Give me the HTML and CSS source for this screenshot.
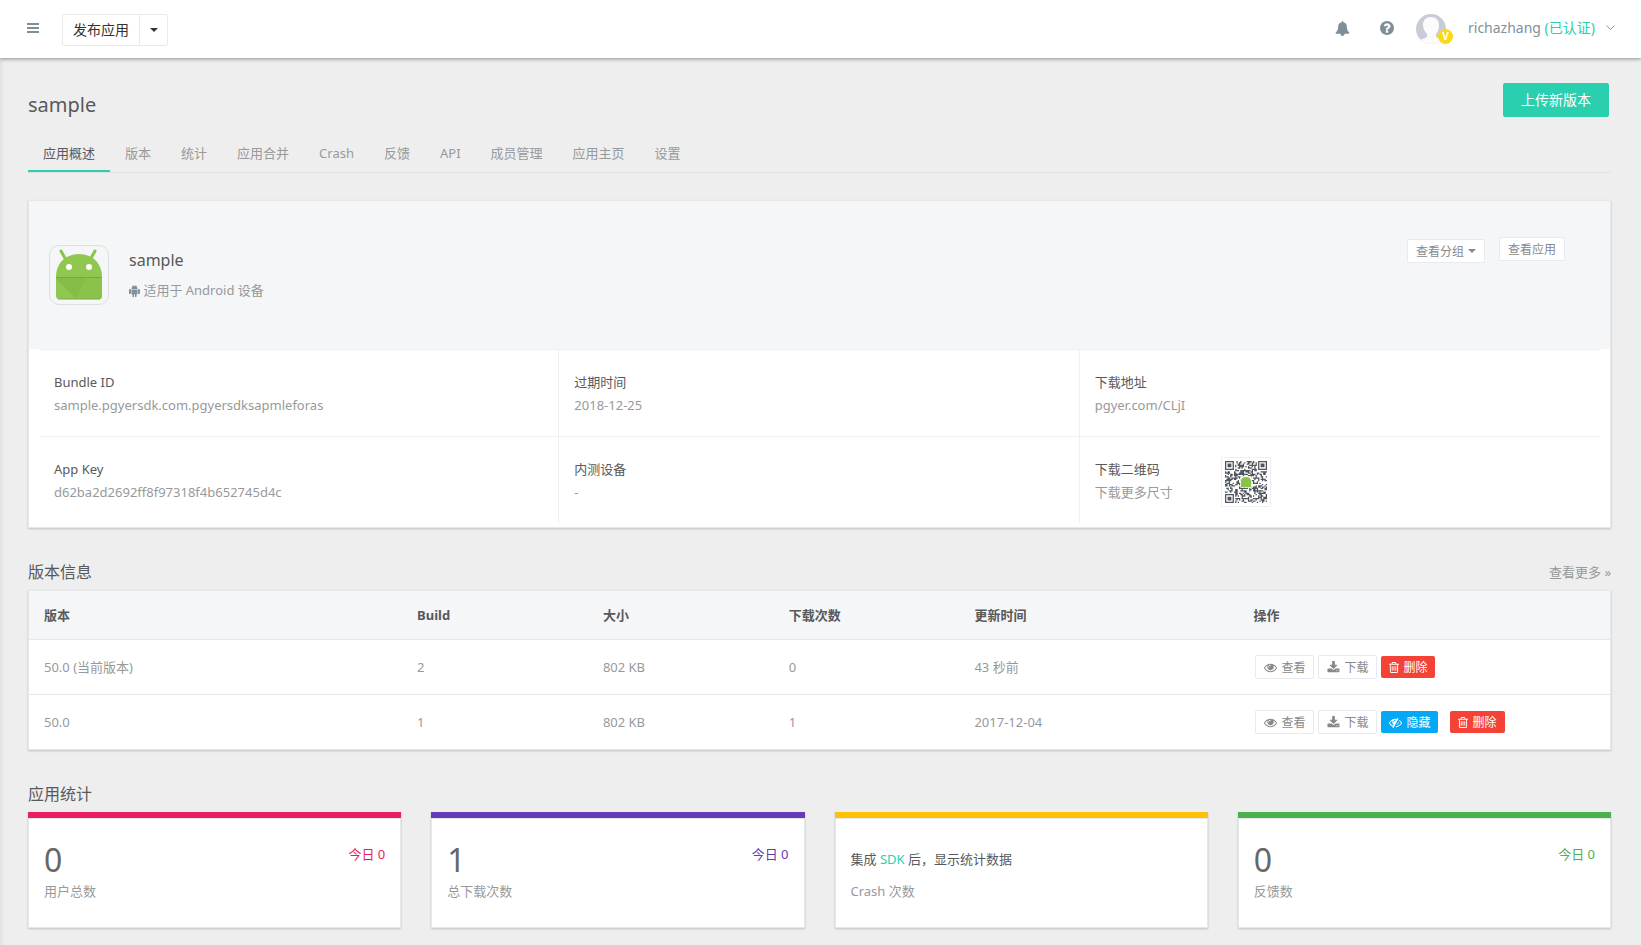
FILE: index.html
```html
<!DOCTYPE html>
<html lang="zh-CN">
<head>
    <meta charset="utf-8">
    <title>sample</title>
    <link rel="stylesheet" href="styles.css">
</head>
<body>
    <!-- shared icons -->
    <svg class="sprite" width="0" height="0">
        <symbol id="i-eye" viewBox="0 0 1792 1792"><path d="M1664 960q-152-236-381-353 61 104 61 225 0 185-131.500 316.500t-316.500 131.500-316.500-131.500-131.500-316.500q0-121 61-225-229 117-381 353 133 205 333.500 326.500t434.500 121.500 434.500-121.500 333.500-326.500zm-720-384q0-20-14-34t-34-14q-125 0-214.500 89.500t-89.500 214.500q0 20 14 34t34 14 34-14 14-34q0-86 61-147t147-61q20 0 34-14t14-34zm848 384q0 34-20 69-140 230-376.500 368.500t-499.500 138.500-499.500-139-376.500-368q-20-35-20-69t20-69q140-229 376.500-368t499.500-139 499.500 139 376.500 368q20 35 20 69z"/></symbol>
        <symbol id="i-download" viewBox="0 0 1792 1792"><path d="M1344 1344q0-26-19-45t-45-19-45 19-19 45 19 45 45 19 45-19 19-45zm256 0q0-26-19-45t-45-19-45 19-19 45 19 45 45 19 45-19 19-45zm128-224v320q0 40-28 68t-68 28h-1472q-40 0-68-28t-28-68v-320q0-40 28-68t68-28h465l135 136q58 56 136 56t136-56l136-136h464q40 0 68 28t28 68zm-325-569q17 41-14 70l-448 448q-18 19-45 19t-45-19l-448-448q-31-29-14-70 17-39 59-39h256v-448q0-26 19-45t45-19h256q26 0 45 19t19 45v448h256q42 0 59 39z"/></symbol>
        <symbol id="i-trash" viewBox="192 0 1408 1792"><path d="M704 736v576q0 14-9 23t-23 9h-64q-14 0-23-9t-9-23v-576q0-14 9-23t23-9h64q14 0 23 9t9 23zm256 0v576q0 14-9 23t-23 9h-64q-14 0-23-9t-9-23v-576q0-14 9-23t23-9h64q14 0 23 9t9 23zm256 0v576q0 14-9 23t-23 9h-64q-14 0-23-9t-9-23v-576q0-14 9-23t23-9h64q14 0 23 9t9 23zm128 724v-948h-896v948q0 22 7 40.500t14.500 27 10.500 8.500h832q3 0 10.500-8.500t14.500-27 7-40.500zm-672-1076h448l-48-117q-7-9-17-11h-317q-10 2-17 11zm928 32v64q0 14-9 23t-23 9h-96v948q0 83-47 143.500t-113 60.500h-832q-66 0-113-58.500t-47-141.500v-952h-96q-14 0-23-9t-9-23v-64q0-14 9-23t23-9h309l70-167q15-37 54-63t79-26h320q40 0 79 26t54 63l70 167h309q14 0 23 9t9 23z"/></symbol>
        <symbol id="i-eye-slash" viewBox="0 0 1792 1792"><path d="M555 1335l78-141q-87-63-136-159t-49-203q0-121 61-225-229 117-381 353 167 258 427 375zm389-759q0-20-14-34t-34-14q-125 0-214.500 89.500t-89.500 214.500q0 20 14 34t34 14 34-14 14-34q0-86 61-147t147-61q20 0 34-14t14-34zm363-191q0 7-1 9-106 189-316 567t-315 566l-49 89q-10 16-28 16-12 0-134-70-16-10-16-28 0-12 44-87-143-65-263.500-173t-208.500-245q-20-31-20-69t20-69q153-235 380-371t496-136q89 0 180 17l54-97q10-16 28-16 5 0 18 6t31 15.500 33 18.500 31.500 18.500 19.500 11.500q16 10 16 27zm37 447q0 139-79 253.500t-209 164.500l280-502q8 45 8 84zm448 128q0 35-20 69-39 64-109 145-150 172-347.500 267t-419.500 95l74-132q212-18 392.500-137t301.500-307q-115-179-282-294l63-112q95 64 182.500 153t144.500 184q20 34 20 69z"/></symbol>
    </svg>

    <header class="navbar">
        <button type="button" class="icon-btn menu-btn" aria-label="菜单">
            <svg width="12" height="10" viewBox="0 0 12 10"><path d="M0 0h12v2H0zM0 4h12v2H0zM0 8h12v2H0z"/></svg>
        </button>
        <div class="btn-group">
            <button type="button" class="publish">发布应用</button>
            <button type="button" class="publish-toggle" aria-label="更多"><span class="caret"></span></button>
        </div>
        <div class="nav-right">
            <button type="button" class="icon-btn" aria-label="通知">
                <svg width="15" height="15" viewBox="0 0 1792 1792"><path d="M1728 1408q0 52-38 90t-90 38h-448q0 106-75 181t-181 75-181-75-75-181h-448q-52 0-90-38t-38-90q50-42 91-88t85-119.500 74.500-158.500 50-206 19.500-260q0-152 117-282.500t307-158.500q-8-19-8-39 0-40 28-68t68-28 68 28 28 68q0 20-8 39 190 28 307 158.500t117 282.500q0 139 19.500 260t50 206 74.500 158.500 85 119.500 91 88z"/></svg>
            </button>
            <button type="button" class="icon-btn" aria-label="帮助">
                <svg width="14" height="14" viewBox="128 128 1536 1536"><path d="M1024 1376v-192q0-14-9-23t-23-9h-192q-14 0-23 9t-9 23v192q0 14 9 23t23 9h192q14 0 23-9t9-23zm256-672q0-88-55.500-163t-138.500-116-170-41q-243 0-371 213-15 24 8 42l132 100q7 6 19 6 16 0 25-12 53-68 86-92 34-24 86-24 48 0 85.500 26t37.500 59q0 38-20 61t-68 45q-63 28-115.500 86.500t-52.500 125.500v36q0 14 9 23t23 9h192q14 0 23-9t9-23q0-19 21.500-49.500t54.500-49.500q32-18 49-28.500t46-35 44.500-48 28-60.500 12.500-81zm384 192q0 209-103 385.500t-279.500 279.500-385.500 103-385.500-103-279.500-279.500-103-385.500 103-385.500 279.500-279.500 385.500-103 385.500 103 279.500 279.500 103 385.500z"/></svg>
            </button>
            <a href="#" class="user">
                <span class="avatar">
                    <svg width="30" height="30" viewBox="0 0 30 30">
                        <defs><clipPath id="round"><circle cx="15" cy="15" r="15"/></clipPath></defs>
                        <g clip-path="url(#round)">
                            <rect width="30" height="30" fill="#c9ccd4"/>
                            <path d="M15 3c5 0 8 3 8 8 0 4-1 7-3 9v3c3 2 7 2 9 4v3H2v-3c3-2 6-2 9-4v-3c-2-2-4-5-4-9 0-5 3-8 8-8z" fill="#fbfbfc"/>
                        </g>
                    </svg>
                    <span class="vip">V</span>
                </span>
                <span>richazhang <span class="verified">(已认证)</span></span>
                <svg class="chevron" width="9" height="6" viewBox="0 0 9 6"><path d="M0.500 0.500L4.500 4.500L8.500 0.500"/></svg>
            </a>
        </div>
    </header>

    <main class="content">
        <div class="page-head">
            <h1>sample</h1>
            <button type="button" class="upload">上传新版本</button>
        </div>

        <nav class="tabs">
            <a href="#" class="active">应用概述</a>
            <a href="#">版本</a>
            <a href="#">统计</a>
            <a href="#">应用合并</a>
            <a href="#">Crash</a>
            <a href="#">反馈</a>
            <a href="#">API</a>
            <a href="#">成员管理</a>
            <a href="#">应用主页</a>
            <a href="#">设置</a>
        </nav>

        <section class="panel app">
            <div class="app-head">
                <div class="app-icon">
                    <svg width="50" height="52" viewBox="0 0 50 52">
                        <path d="M7 2l5 9M41 2l-5 9" stroke="#8bc34a" stroke-width="3" stroke-linecap="round"/>
                        <path d="M2 28C2 14 12 5 25 5s23 9 23 23v19q0 3-3 3H5q-3 0-3-3z" fill="#8fc751"/>
                        <path d="M2 29h46v18q0 3-3 3H22z" fill="#8bc34a"/>
                        <path d="M2 29h30L22 50z" fill="#7fb446" opacity=".4"/>
                        <path d="M2 28h46v1H2z" fill="#76a843"/>
                        <path d="M4 50h42" stroke="#77a944"/>
                        <circle cx="15" cy="18" r="3" fill="#fff"/>
                        <circle cx="35" cy="18" r="3" fill="#fff"/>
                    </svg>
                </div>
                <div class="app-name">
                    <h2>sample</h2>
                    <p>
                        <svg width="11" height="12" viewBox="0 0 22 24"><path d="M5 8C5 5 6 3 8 2L7 0h1l1 2q2-1 4 0l1-2h1l-1 2c2 1 3 3 3 6zM5 9h12v10h-2v5h-3v-5h-2v5H7v-5H5zM0 10q0-2 2-2t2 2v6q0 2-2 2t-2-2zM18 10q0-2 2-2t2 2v6q0 2-2 2t-2-2z"/></svg>
                        适用于 Android 设备
                    </p>
                </div>
                <div class="app-actions">
                    <button type="button" class="btn">查看分组 <span class="caret"></span></button>
                    <button type="button" class="btn">查看应用</button>
                </div>
            </div>
            <div class="info">
                <div class="cell">
                    <h3>Bundle ID</h3>
                    <p>sample.pgyersdk.com.pgyersdksapmleforas</p>
                </div>
                <div class="cell">
                    <h3>过期时间</h3>
                    <p>2018-12-25</p>
                </div>
                <div class="cell">
                    <h3>下载地址</h3>
                    <p><a href="#">pgyer.com/CLjI</a></p>
                </div>
                <div class="cell">
                    <h3>App Key</h3>
                    <p>d62ba2d2692ff8f97318f4b652745d4c</p>
                </div>
                <div class="cell">
                    <h3>内测设备</h3>
                    <p>-</p>
                </div>
                <div class="cell qr-cell">
                    <div>
                        <h3>下载二维码</h3>
                        <p><a href="#">下载更多尺寸</a></p>
                    </div>
                    <div class="qr">
                        <svg width="42" height="42" viewBox="0 0 33 33">
                            <path id="qrModules" fill="#4f545e"/>
                            <rect x="12" y="12" width="9" height="9" fill="#fff"/>
                            <path d="M12.500 20.500v-4q0-4 4-4t4 4v4z" fill="#8bc34a"/>
                        </svg>
                    </div>
                </div>
            </div>
        </section>

        <div class="section-head">
            <h2>版本信息</h2>
            <a href="#">查看更多 »</a>
        </div>
        <table class="panel versions">
            <thead>
                <tr>
                    <th class="col-version">版本</th>
                    <th class="col-small">Build</th>
                    <th class="col-small">大小</th>
                    <th class="col-small">下载次数</th>
                    <th class="col-time">更新时间</th>
                    <th>操作</th>
                </tr>
            </thead>
            <tbody>
                <tr>
                    <td>50.0 (当前版本)</td>
                    <td>2</td>
                    <td>802 KB</td>
                    <td>0</td>
                    <td>43 秒前</td>
                    <td>
                        <div class="actions">
                            <button type="button" class="btn"><svg width="13" height="13"><use href="#i-eye"/></svg>查看</button>
                            <button type="button" class="btn"><svg width="13" height="13"><use href="#i-download"/></svg>下载</button>
                            <button type="button" class="btn danger"><svg width="10" height="13"><use href="#i-trash"/></svg>删除</button>
                        </div>
                    </td>
                </tr>
                <tr>
                    <td>50.0</td>
                    <td>1</td>
                    <td>802 KB</td>
                    <td>1</td>
                    <td>2017-12-04</td>
                    <td>
                        <div class="actions">
                            <button type="button" class="btn"><svg width="13" height="13"><use href="#i-eye"/></svg>查看</button>
                            <button type="button" class="btn"><svg width="13" height="13"><use href="#i-download"/></svg>下载</button>
                            <button type="button" class="btn info-btn"><svg width="13" height="13"><use href="#i-eye-slash"/></svg>隐藏</button>
                            <button type="button" class="btn danger"><svg width="10" height="13"><use href="#i-trash"/></svg>删除</button>
                        </div>
                    </td>
                </tr>
            </tbody>
        </table>

        <div class="section-head">
            <h2>应用统计</h2>
        </div>
        <div class="stats">
            <div class="stat pink">
                <div class="stat-top"><span class="number">0</span><span class="today">今日 0</span></div>
                <p>用户总数</p>
            </div>
            <div class="stat purple">
                <div class="stat-top"><span class="number">1</span><span class="today">今日 0</span></div>
                <p>总下载次数</p>
            </div>
            <div class="stat yellow">
                <div class="stat-top"><span class="hint">集成 <a href="#">SDK</a> 后，显示统计数据</span></div>
                <p>Crash 次数</p>
            </div>
            <div class="stat green">
                <div class="stat-top"><span class="number">0</span><span class="today">今日 0</span></div>
                <p>反馈数</p>
            </div>
        </div>
    </main>

    <script src="qr.js"></script>
</body>
</html>
```
FILE: styles.css
```css
* {
    box-sizing: border-box;
}
body {
    margin: 0;
    min-height: 100vh;
    background-color: #eee;
    color: #98999b;
    font-family: "Noto Sans", "Noto Sans CJK SC", sans-serif;
    font-size: 13px;
    line-height: 22px;
}
h1, h2, h3, p {
    margin: 0;
    font-weight: normal;
}
a {
    color: inherit;
    text-decoration: none;
}
button {
    font-family: inherit;
    cursor: pointer;
}
svg {
    fill: currentColor;
}
.sprite {
    position: absolute;
}
.caret {
    display: inline-block;
    width: 0;
    height: 0;
    border-top: 4px solid;
    border-left: 4px solid transparent;
    border-right: 4px solid transparent;
    vertical-align: middle;
}

/* top bar */
.navbar {
    position: relative;
    display: flex;
    align-items: center;
    height: 58px;
    padding: 0 26px;
    background-color: #fff;
    box-shadow: 0 1px 4px rgba(0,0,0,0.4);
    color: #7f929c;
    font-size: 14px;
}
.icon-btn {
    display: flex;
    padding: 0;
    border: none;
    background: none;
    color: #7f8f9a;
}
.menu-btn {
    margin: 0 23px 2px 1px;
}
.btn-group {
    display: flex;
    height: 32px;
    margin-top: 2px;
}
.btn-group button {
    border: 1px solid #e8eaf1;
    background-color: #fff;
    color: #333;
    font-size: 14px;
}
.btn-group .publish {
    padding: 0 10px 2px;
    border-radius: 2px 0 0 2px;
}
.btn-group .publish-toggle {
    display: flex;
    justify-content: center;
    align-items: center;
    width: 29px;
    margin-left: -1px;
    padding: 0;
    border-radius: 0 2px 2px 0;
}
.nav-right {
    display: flex;
    align-items: center;
    gap: 30px;
    margin-left: auto;
    padding-bottom: 2px;
}
.user {
    display: flex;
    align-items: center;
    margin-left: -8px;
}
.avatar {
    position: relative;
    display: flex;
    margin: 2px 22px 0 0;
}
.vip {
    position: absolute;
    right: -7px;
    bottom: 0;
    width: 15px;
    height: 15px;
    border-radius: 50%;
    background-color: #fbd916;
    color: #fff;
    font-size: 10px;
    font-weight: bold;
    line-height: 15px;
    text-align: center;
}
.verified {
    color: #29cfae;
}
.chevron {
    margin-left: 11px;
    fill: none;
    stroke: #8a99a2;
}

/* page */
.content {
    min-height: calc(100vh - 58px);
    padding: 25px 30px 16px 28px;
    box-shadow: inset 4px 0 4px -2px rgba(0,0,0,0.06);
}
.page-head {
    display: flex;
    justify-content: space-between;
    align-items: flex-start;
}
h1 {
    padding-top: 7px;
    color: #58595b;
    font-size: 20px;
    line-height: 30px;
}
.upload {
    height: 34px;
    margin-right: 2px;
    padding: 0 18px 2px;
    border: none;
    border-radius: 2px;
    background-color: #29cfae;
    color: #fff;
    font-size: 14px;
}
.tabs {
    display: flex;
    margin: 14px 0 27px;
    border-bottom: 1px solid #dedfe0;
}
.tabs a {
    padding: 7px 15px;
    line-height: 24px;
}
.tabs .active {
    padding-bottom: 5px;
    border-bottom: 2px solid #29cfae;
    color: #58595b;
}
.panel {
    border: 1px solid #e6e7e8;
    background-color: #fff;
    box-shadow: 0 1px 2px rgba(0,0,0,0.2);
}
.btn {
    display: inline-flex;
    align-items: center;
    gap: 4px;
    height: 24px;
    padding: 0 8px;
    border: 1px solid #e8eaf1;
    border-radius: 2px;
    background-color: #fff;
    color: #87898c;
    font-size: 12px;
}
.app {
    padding-bottom: 4px;
}
.app-head {
    display: flex;
    align-items: flex-start;
    height: 148px;
    padding: 36px 45px 0 20px;
    background-color: #f4f6f8;
}
.app-icon {
    display: flex;
    justify-content: center;
    align-items: center;
    width: 60px;
    height: 60px;
    margin: 8px 20px 0 0;
    border: 1px solid #dcdee0;
    border-radius: 10px;
}
.app-name h2 {
    padding-top: 10px;
    color: #58595b;
    font-size: 16px;
    line-height: 26px;
}
.app-name p {
    padding-top: 6px;
}
.app-name svg {
    color: #7f929c;
    vertical-align: -2px;
}
.app-actions {
    display: flex;
    gap: 14px;
    margin-left: auto;
}
.app-actions .btn:first-child {
    margin-top: 2px;
}
.info {
    display: grid;
    grid-template-columns: repeat(3, 1fr);
    margin: 0 10px;
}
.cell {
    min-height: 87px;
    padding: 20px 15px 0;
    border-top: 1px solid #eef0f2;
    border-right: 1px solid #eef0f2;
}
.cell:nth-child(3n) {
    border-right: none;
}
.cell h3 {
    color: #58595b;
    font-size: 13px;
    line-height: 24px;
}
.qr-cell {
    display: flex;
    gap: 48px;
}
.qr {
    display: flex;
    justify-content: center;
    align-items: center;
    width: 50px;
    height: 50px;
    border: 1px solid #eef0f2;
}

/* versions */
.section-head {
    display: flex;
    justify-content: space-between;
    align-items: center;
    margin: 31px 0 5px;
}
.section-head h2 {
    color: #58595b;
    font-size: 16px;
    line-height: 26px;
}
.versions {
    width: 100%;
    table-layout: fixed;
    border-collapse: separate;
    border-spacing: 0;
}
.versions th, .versions td {
    padding: 0 15px;
    text-align: left;
}
.versions th {
    height: 48px;
    background-color: #f4f6f8;
    color: #58595b;
}
.versions td {
    height: 55px;
    border-top: 1px solid #e6e7e8;
}
.col-version {
    width: 23.6%;
}
.col-small {
    width: 11.75%;
}
.col-time {
    width: 17.65%;
}
.actions {
    display: flex;
    align-items: center;
    gap: 4px;
    padding-left: 2px;
}
.danger, .info-btn {
    height: 22px;
    border: none;
    color: #fff;
}
.danger {
    background-color: #f44336;
}
.info-btn {
    background-color: #03a9f4;
}
.info-btn + .danger {
    margin-left: 8px;
}

/* stats */
.stats {
    display: grid;
    grid-template-columns: repeat(4, 1fr);
    gap: 30px;
}
.stat {
    min-height: 116px;
    padding: 20px 16px;
    border-top: 6px solid;
    background-color: #fff;
    box-shadow: inset 0 0 0 1px #e6e7e8, 0 1px 2px rgba(0,0,0,0.2);
}
.stat-top {
    display: flex;
    justify-content: space-between;
    height: 42px;
}
.number {
    color: #666769;
    font-size: 32px;
    line-height: 44px;
}
.today {
    line-height: 32px;
}
.hint {
    color: #58595b;
    line-height: 42px;
}
.hint a {
    color: #29cfae;
}
.pink {
    border-top-color: #e91e63;
}
.pink .today {
    color: #e91e63;
}
.purple {
    border-top-color: #673ab7;
}
.purple .today {
    color: #673ab7;
}
.yellow {
    border-top-color: #ffc107;
}
.green {
    border-top-color: #4caf50;
}
.green .today {
    color: #4caf50;
}
```
FILE: qr.js
```js
// fills the download code with modules, three finder squares in the corners
var size = 33;
var seed = 7;
var d = '';

function finder(x, y) {
    return Math.max(Math.abs(x - 3), Math.abs(y - 3));
}

for (var y = 0; y < size; y++) {
    for (var x = 0; x < size; x++) {
        var ring = Math.min(finder(x, y), finder(size - 1 - x, y), finder(x, size - 1 - y));
        seed = (seed * 1103515245 + 12345) % 2147483648;
        var on = ring <= 4 ? (ring !== 2 && ring !== 4) : seed / 2147483648 > 0.5;
        if (on) {
            d += 'M' + x + ' ' + y + 'h1v1h-1z';
        }
    }
}
document.getElementById('qrModules').setAttribute('d', d);
```
